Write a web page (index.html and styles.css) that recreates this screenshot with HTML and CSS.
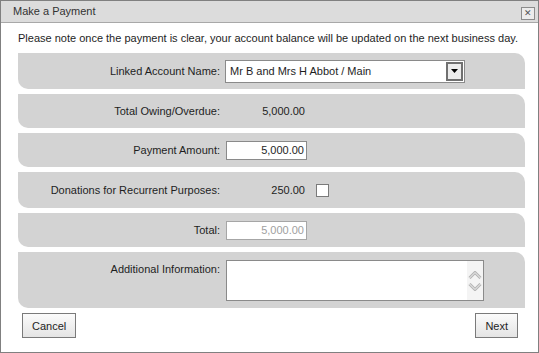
FILE: index.html
```html
<!DOCTYPE html>
<html>
<head>
<meta charset="utf-8">
<link rel="stylesheet" href="styles.css">
</head>
<body>
<div class="dialog">
  <div class="titlebar">
    <span class="title">Make a Payment</span>
    <span class="close">&#x2715;</span>
  </div>
  <p class="note">Please note once the payment is clear, your account balance will be updated on the next business day.</p>
  <div class="rows">
    <div class="row h36">
      <span class="label">Linked Account Name:</span>
      <div class="select">
        <span class="select-text">Mr B and Mrs H Abbot / Main</span>
        <span class="select-btn"><svg width="7" height="4" viewBox="0 0 7 4"><polygon points="0,0 7,0 3.5,4" fill="#000"/></svg></span>
      </div>
    </div>
    <div class="row">
      <span class="label">Total Owing/Overdue:</span>
      <span class="value">5,000.00</span>
    </div>
    <div class="row">
      <span class="label">Payment Amount:</span>
      <span class="input">5,000.00</span>
    </div>
    <div class="row h36">
      <span class="label">Donations for Recurrent Purposes:</span>
      <span class="value">250.00</span>
      <span class="checkbox"></span>
    </div>
    <div class="row">
      <span class="label">Total:</span>
      <span class="input disabled">5,000.00</span>
    </div>
    <div class="row tall">
      <span class="label top">Additional Information:</span>
      <div class="textarea">
        <div class="scroll">
          <svg width="14" height="8" viewBox="0 0 14 8"><polyline points="1.5,7 7,1.5 12.5,7" fill="none" stroke="#b4b4b4" stroke-width="3"/><polyline points="1.5,7 7,1.5 12.5,7" fill="none" stroke="#f4f4f4" stroke-width="1"/></svg>
          <svg width="14" height="8" viewBox="0 0 14 8"><polyline points="1.5,1 7,6.5 12.5,1" fill="none" stroke="#b4b4b4" stroke-width="3"/><polyline points="1.5,1 7,6.5 12.5,1" fill="none" stroke="#f4f4f4" stroke-width="1"/></svg>
        </div>
      </div>
    </div>
  </div>
  <div class="footer">
    <button class="btn">Cancel</button>
    <button class="btn">Next</button>
  </div>
</div>
</body>
</html>
```
FILE: styles.css
```css
html, body {
  margin: 0;
  padding: 0;
  background: #fff;
}
body {
  font-family: "Liberation Sans", Arial, sans-serif;
  font-size: 11px;
  color: #1e1e1e;
}
.dialog {
  width: 539px;
  height: 353px;
  box-sizing: border-box;
  border: 1px solid #808080;
  background: #fff;
}
.titlebar {
  height: 21px;
  border-bottom: 1px solid #a8a8a8;
  background: #dcdcdc;
  display: flex;
  justify-content: space-between;
  align-items: center;
  padding: 0 3px 0 12px;
}
.title {
  color: #333;
  line-height: 13px;
}
.close {
  align-self: flex-start;
  margin-top: 6px;
  width: 12px;
  height: 11px;
  border: 1px solid #8c8c8c;
  background: #ececec;
  color: #555;
  font-size: 9px;
  line-height: 11px;
  text-align: center;
}
.note {
  margin: 9px 0 0 17px;
  line-height: 13px;
}
.rows {
  margin-top: 8px;
  padding: 0 13px 0 17px;
  display: flex;
  flex-direction: column;
  gap: 5px;
}
.row {
  height: 34px;
  background: #d3d3d3;
  border-radius: 0 10px 0 10px;
  display: flex;
  align-items: center;
}
.row.h36 {
  height: 36px;
}
.row.tall {
  height: 56px;
  box-sizing: border-box;
  align-items: flex-start;
  padding-top: 8px;
}
.label {
  width: 202px;
  text-align: right;
  margin-right: 6px;
  line-height: 13px;
}
.label.top {
  margin-top: 3px;
}
.select {
  width: 240px;
  height: 23px;
  box-sizing: border-box;
  border: 1px solid #8a8a8a;
  background: #fff;
  display: flex;
  align-items: center;
  justify-content: space-between;
  padding: 1px 1px 1px 4px;
  margin-left: -1px;
}
.select-text {
  line-height: 13px;
}
.select-btn {
  width: 17px;
  height: 19px;
  box-sizing: border-box;
  border: 2px solid #707070;
  background: #ececec;
  display: flex;
  align-items: center;
  justify-content: center;
}
.value {
  width: 81px;
  box-sizing: border-box;
  text-align: right;
  padding-right: 2px;
  line-height: 13px;
}
.input {
  width: 81px;
  height: 19px;
  box-sizing: border-box;
  border: 1px solid #8a8a8a;
  background: #fff;
  text-align: right;
  padding-right: 2px;
  line-height: 17px;
}
.input.disabled {
  border-color: #a6a6a6;
  color: #a0a0a0;
}
.checkbox {
  width: 13px;
  height: 13px;
  box-sizing: border-box;
  border: 1px solid #7a7a7a;
  background: #fff;
  margin-left: 9px;
}
.textarea {
  width: 258px;
  height: 41px;
  box-sizing: border-box;
  border: 1px solid #8a8a8a;
  background: #fff;
  display: flex;
  justify-content: flex-end;
}
.scroll {
  width: 16px;
  background: #f4f4f4;
  display: flex;
  flex-direction: column;
  align-items: center;
  justify-content: center;
  gap: 4px;
}
.footer {
  margin-top: 5px;
  padding: 0 20px 0 21px;
  display: flex;
  justify-content: space-between;
}
.btn {
  height: 25px;
  box-sizing: border-box;
  border: 1px solid #7a7a7a;
  border-radius: 0;
  background: linear-gradient(#fbfbfb, #e4e4e4);
  font-family: "Liberation Sans", Arial, sans-serif;
  font-size: 11px;
  color: #1e1e1e;
  padding: 0 9px;
  margin: 0;
}
```
